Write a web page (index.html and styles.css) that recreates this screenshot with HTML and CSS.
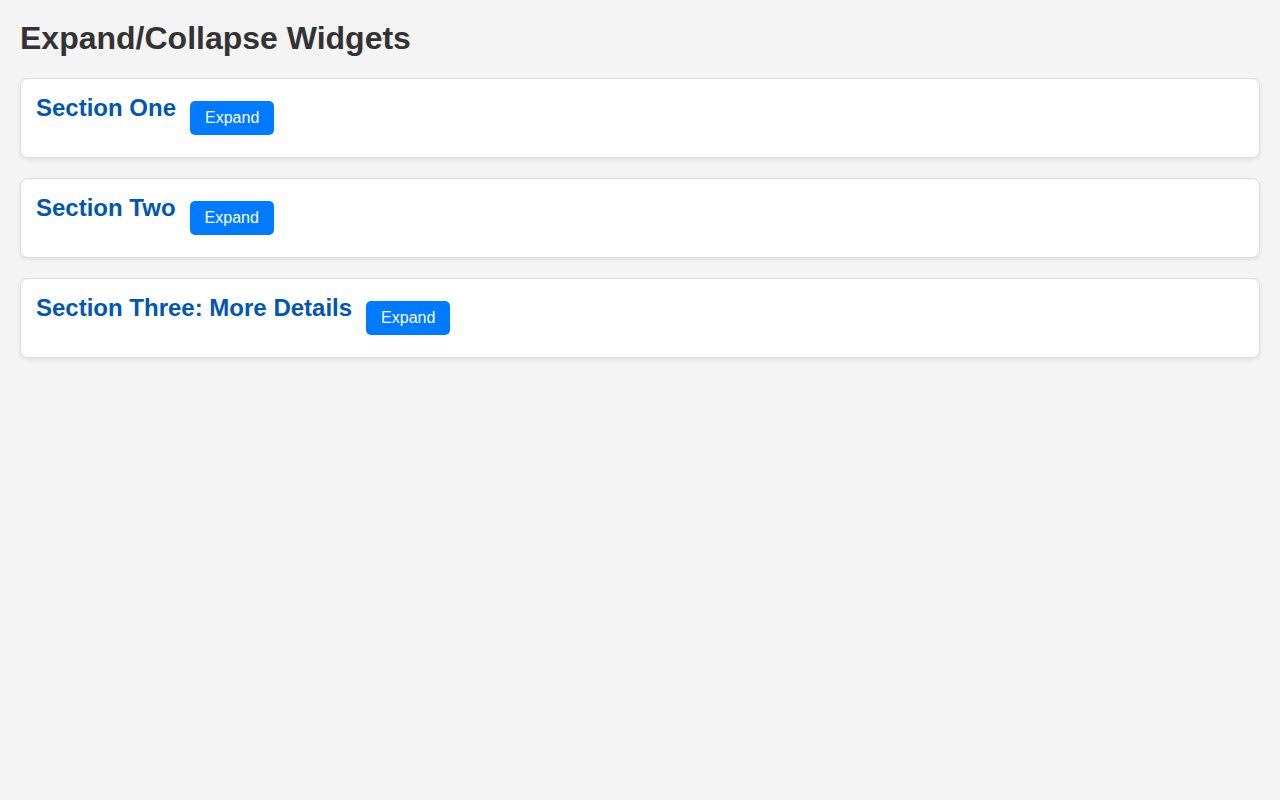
FILE: index.html
```html
<!DOCTYPE html>
<html lang="en">
<head>
<meta charset="utf-8">
<title>Expand/Collapse Widgets</title>
<link rel="stylesheet" href="styles.css">
</head>
<body>
  <h1 class="page-title">Expand/Collapse Widgets</h1>
  <div class="widget">
    <div class="widget-header">
      <h2 class="widget-title">Section One</h2>
      <button class="toggle-btn">Expand</button>
    </div>
  </div>
  <div class="widget">
    <div class="widget-header">
      <h2 class="widget-title">Section Two</h2>
      <button class="toggle-btn">Expand</button>
    </div>
  </div>
  <div class="widget">
    <div class="widget-header">
      <h2 class="widget-title">Section Three: More Details</h2>
      <button class="toggle-btn">Expand</button>
    </div>
  </div>
</body>
</html>
```
FILE: styles.css
```css
html, body {
  margin: 0;
  background: #f4f4f4;
}
body {
  padding: 20px;
  font-family: "Liberation Sans", Arial, Helvetica, sans-serif;
  color: #333;
}
.page-title {
  margin: 0 0 21px;
  font-size: 32px;
  line-height: 37px;
  font-weight: bold;
  color: #333;
}
.widget {
  background: #fff;
  border: 1px solid #ddd;
  border-radius: 8px;
  box-shadow: 0 2px 4px rgba(0, 0, 0, 0.08);
  padding: 15px 15px 22px;
  margin-bottom: 20px;
}
.widget-header {
  display: flex;
  align-items: flex-start;
}
.widget-title {
  margin: 0;
  font-size: 24px;
  line-height: 28px;
  font-weight: bold;
  color: #0056b3;
}
.toggle-btn {
  margin: 7px 0 0 14px;
  padding: 8px 15px;
  font-family: "Liberation Sans", Arial, Helvetica, sans-serif;
  font-size: 16px;
  line-height: 18px;
  color: #fff;
  background: #007bff;
  border: none;
  border-radius: 5px;
  cursor: pointer;
}
```
